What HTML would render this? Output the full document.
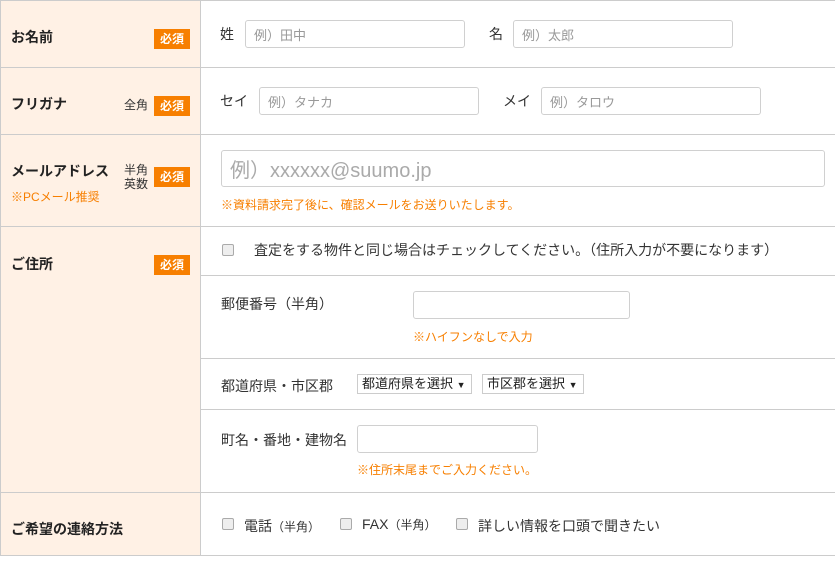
<!DOCTYPE html>
<html><head><meta charset="utf-8"><style>
*{margin:0;padding:0;box-sizing:border-box}
body{width:835px;height:564px;background:#fff;font-family:"Liberation Sans","Noto Sans CJK JP",sans-serif;color:#333;position:relative;overflow:hidden}
.a{position:absolute;white-space:nowrap}
.hl{position:absolute;height:1px;background:#ccc}
.lbl{font-size:14px;font-weight:bold;color:#222}
.badge{position:absolute;width:36px;height:20px;background:#f77f00;color:#fff;font-size:12px;font-weight:bold;text-align:center;line-height:20px}
.inp{position:absolute;border:1px solid #d0d0d0;border-radius:3px;background:#fff;font-size:13px;color:#999;padding-left:8px;display:flex;align-items:center}
.t{font-size:14px;color:#333}
.o{font-size:12px;color:#f77f00}
.cb{position:absolute;width:12px;height:12px;border:1px solid #aaa;border-radius:2px;background:#eee}
.sel{position:absolute;border:1px solid #ccc;height:20px;font-size:13px;color:#222;line-height:18px;padding-left:4px;background:#fff}
</style></head><body>
<div class="a" style="left:0;top:0;width:200px;height:555px;background:#fff1e5"></div>
<div class="a" style="left:200px;top:0;width:1px;height:555px;background:#ccc"></div>
<div class="a" style="left:0;top:0;width:1px;height:555px;background:#ccc"></div>
<div class="hl" style="left:0;top:0;width:835px"></div>
<div class="hl" style="left:0;top:67px;width:835px"></div>
<div class="hl" style="left:0;top:134px;width:835px"></div>
<div class="hl" style="left:0;top:226px;width:835px"></div>
<div class="hl" style="left:200px;top:275px;width:635px"></div>
<div class="hl" style="left:200px;top:358px;width:635px"></div>
<div class="hl" style="left:200px;top:409px;width:635px"></div>
<div class="hl" style="left:0;top:492px;width:835px"></div>
<div class="hl" style="left:0;top:555px;width:835px"></div>

<div class="a lbl" style="left:11px;top:27px">お名前</div>
<div class="badge" style="left:154px;top:29px">必須</div>
<div class="a t" style="left:220px;top:24px">姓</div>
<div class="inp" style="left:245px;top:20px;width:220px;height:28px">例）田中</div>
<div class="a t" style="left:489px;top:24px">名</div>
<div class="inp" style="left:513px;top:20px;width:220px;height:28px">例）太郎</div>

<div class="a lbl" style="left:11px;top:94px">フリガナ</div>
<div class="a" style="left:124px;top:96px;font-size:12px;color:#333">全角</div>
<div class="badge" style="left:154px;top:96px">必須</div>
<div class="a t" style="left:220px;top:91px">セイ</div>
<div class="inp" style="left:259px;top:87px;width:220px;height:28px">例）タナカ</div>
<div class="a t" style="left:503px;top:91px">メイ</div>
<div class="inp" style="left:541px;top:87px;width:220px;height:28px">例）タロウ</div>

<div class="a lbl" style="left:11px;top:161px">メールアドレス</div>
<div class="a" style="left:11px;top:188px;font-size:12px;color:#f77f00">※PCメール推奨</div>
<div class="a" style="left:124px;top:163px;font-size:12px;line-height:14px;color:#333">半角<br>英数</div>
<div class="badge" style="left:154px;top:167px">必須</div>
<div class="inp" style="left:221px;top:150px;width:604px;height:37px;font-size:20px;color:#aaa">例）xxxxxx@suumo.jp</div>
<div class="a o" style="left:221px;top:196px">※資料請求完了後に、確認メールをお送りいたします。</div>

<div class="a lbl" style="left:11px;top:254px">ご住所</div>
<div class="badge" style="left:154px;top:255px">必須</div>
<div class="cb" style="left:222px;top:244px"></div>
<div class="a t" style="left:254px;top:240px">査定をする物件と同じ場合はチェックしてください。（住所入力が不要になります）</div>
<div class="a t" style="left:221px;top:294px">郵便番号（半角）</div>
<div class="inp" style="left:413px;top:291px;width:217px;height:28px"></div>
<div class="a o" style="left:413px;top:328px">※ハイフンなしで入力</div>
<div class="a t" style="left:221px;top:376px">都道府県・市区郡</div>
<div class="sel" style="left:357px;top:374px;width:115px">都道府県を選択 <span style="font-size:9px">▼</span></div>
<div class="sel" style="left:482px;top:374px;width:102px">市区郡を選択 <span style="font-size:9px">▼</span></div>
<div class="a t" style="left:221px;top:430px">町名・番地・建物名</div>
<div class="inp" style="left:357px;top:425px;width:181px;height:28px"></div>
<div class="a o" style="left:357px;top:461px">※住所末尾までご入力ください。</div>

<div class="a lbl" style="left:11px;top:519px">ご希望の連絡方法</div>
<div class="cb" style="left:222px;top:518px"></div>
<div class="a t" style="left:244px;top:516px">電話<span style="font-size:12px">（半角）</span></div>
<div class="cb" style="left:340px;top:518px"></div>
<div class="a t" style="left:362px;top:516px">FAX<span style="font-size:12px">（半角）</span></div>
<div class="cb" style="left:456px;top:518px"></div>
<div class="a t" style="left:478px;top:516px">詳しい情報を口頭で聞きたい</div>
</body></html>
